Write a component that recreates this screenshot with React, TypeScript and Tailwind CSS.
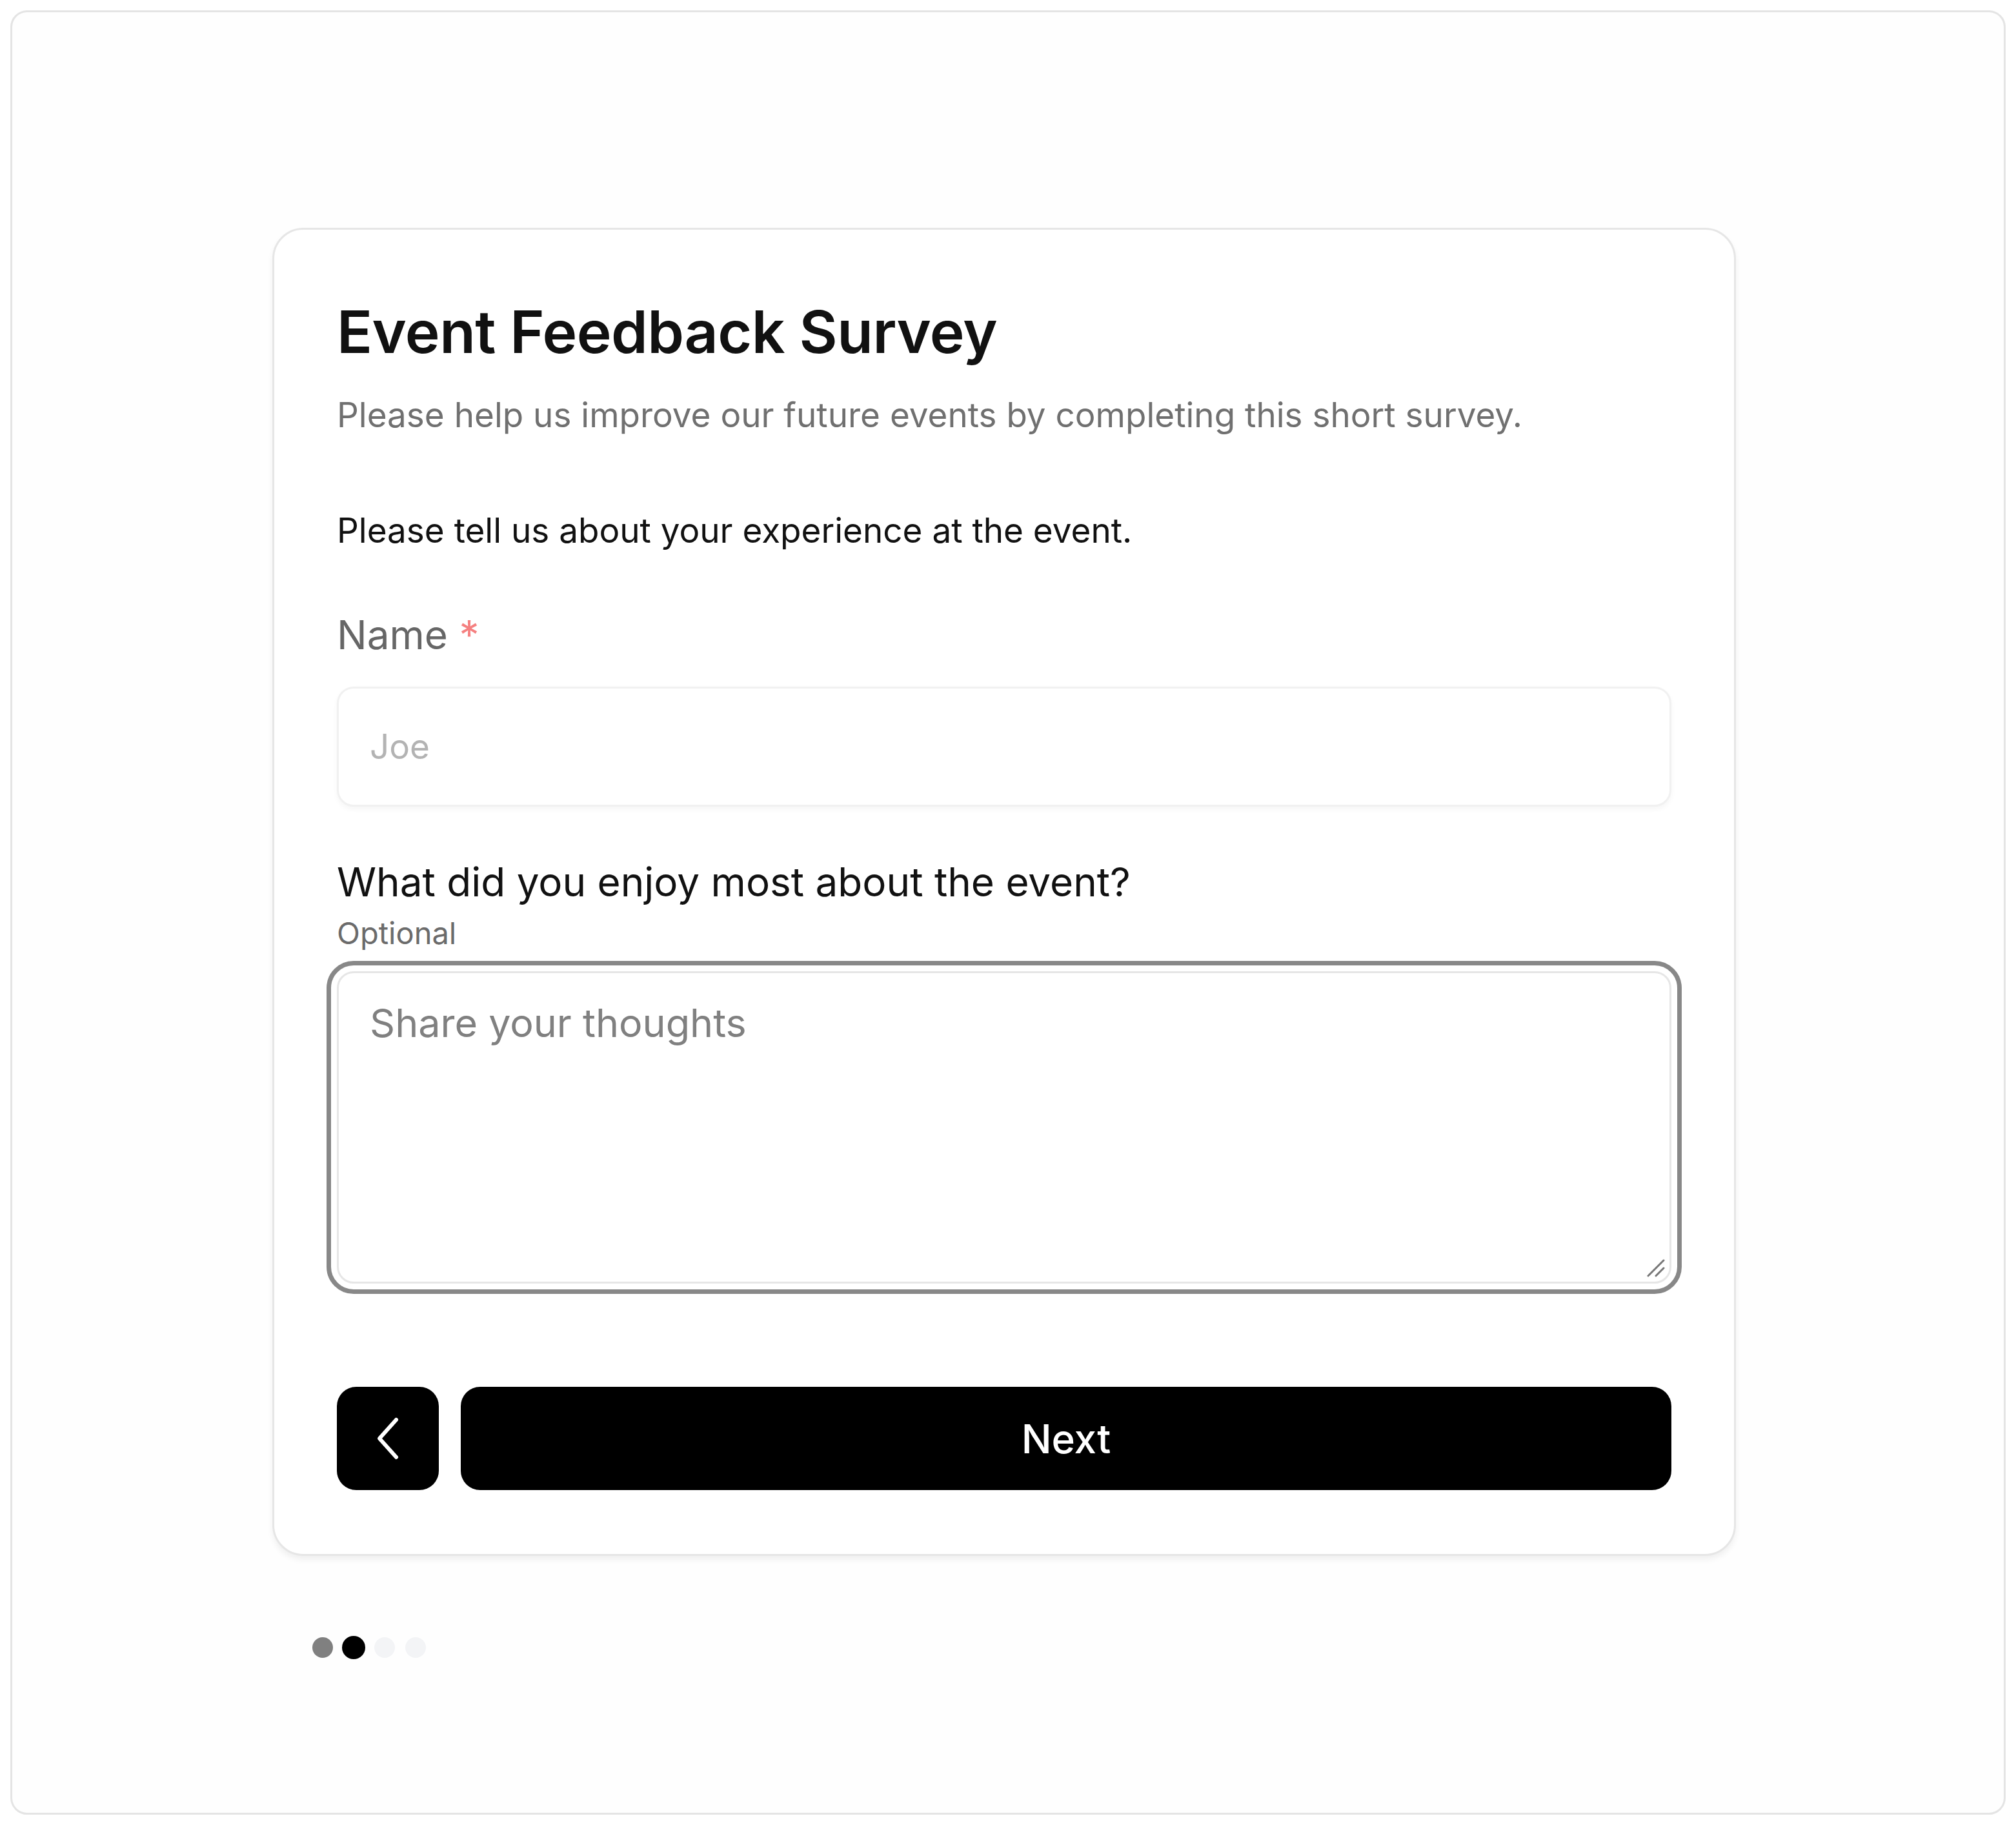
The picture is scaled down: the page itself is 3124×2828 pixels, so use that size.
import { useState } from 'react'

const FONT = "font-['Inter','Noto_Sans',sans-serif]"

function ResizeGrip() {
  return (
    <svg className="absolute right-[10px] bottom-[10px]" width="30" height="30" viewBox="0 0 30 30">
      <path d="M28 4 L4 28" stroke="#777" strokeWidth="3" strokeLinecap="round" />
      <path d="M28 16 L16 28" stroke="#777" strokeWidth="3" strokeLinecap="round" />
    </svg>
  )
}

export default function App() {
  const [name, setName] = useState('')
  const [thoughts, setThoughts] = useState('')
  const steps = ['bg-[#808080]', 'bg-black', 'bg-[#f3f4f6]', 'bg-[#f3f4f6]']

  return (
    <div className={`min-h-screen bg-white p-4 ${FONT}`}>
      <div className="w-[3092px] h-[2796px] rounded-[26px] border-[3px] border-[#e4e4e4] bg-[#fefefe] flex flex-col items-start pl-[403px] pt-[334px]">
        {/* Card */}
        <div className="w-[2268px] rounded-[48px] border-[3px] border-[#e6e6e6] bg-white shadow-[0_6px_10px_rgba(0,0,0,0.06)] px-[97px] pt-[104px] pb-[99px]">
          <h1 className="text-[91px] leading-[1.2] font-semibold text-[#111] tracking-[-0.5px]">
            Event Feedback Survey
          </h1>
          <p className="mt-[39px] text-[53px] leading-[1.35] text-[#707070]">
            Please help us improve our future events by completing this short survey.
          </p>

          <p className="mt-[107px] text-[53px] leading-[1.35] text-[#111]">
            Please tell us about your experience at the event.
          </p>

          {/* Name */}
          <div className="mt-[84px] text-[62px] leading-[1.35] text-[#666]">
            Name <span className="text-[#f58080]">*</span>
          </div>
          <input
            value={name}
            onChange={(e) => setName(e.target.value)}
            placeholder="Joe"
            className="mt-[38px] w-full h-[186px] rounded-[26px] border-[3px] border-[#f1f1f1] bg-white px-[48px] text-[53px] text-[#222] placeholder:text-[#b3b3b3] shadow-[0_4px_8px_rgba(0,0,0,0.04)] outline-none"
          />

          {/* Question */}
          <div className="mt-[75px] text-[62px] leading-[1.35] text-[#111]">
            What did you enjoy most about the event?
          </div>
          <div className="mt-[5px] text-[47px] leading-[1.35] text-[#6b6b6b]">Optional</div>
          <div className="relative mt-[28px]">
            <textarea
              value={thoughts}
              onChange={(e) => setThoughts(e.target.value)}
              placeholder="Share your thoughts"
              className="block w-full h-[484px] resize-none rounded-[26px] border-[3px] border-[#e6e6e6] bg-white px-[48px] py-[36px] text-[61px] leading-[1.35] text-[#222] placeholder:text-[#808080] outline-[7px] outline-solid outline-[#888] outline-offset-[9px]"
            />
            <ResizeGrip />
          </div>

          {/* Actions */}
          <div className="mt-[160px] flex gap-[34px]">
            <button className="w-[158px] h-[160px] shrink-0 rounded-[30px] bg-black flex items-center justify-center">
              <svg width="40" height="68" viewBox="0 0 40 68" fill="none">
                <path d="M33 5 L7 34 L33 63" stroke="white" strokeWidth="6" strokeLinecap="round" strokeLinejoin="round" />
              </svg>
            </button>
            <button className="flex-1 h-[160px] rounded-[30px] bg-black text-white text-[62px] font-medium">
              Next
            </button>
          </div>
        </div>

        {/* Progress dots */}
        <div className="w-[2268px] mt-[124px] pl-[62px] flex items-center gap-[16px]">
          {steps.map((c, i) => (
            <span key={i} className={`rounded-full ${i === 1 ? 'w-[36px] h-[36px] -mx-[2px]' : 'w-[32px] h-[32px]'} ${c}`} />
          ))}
        </div>
      </div>
    </div>
  )
}
